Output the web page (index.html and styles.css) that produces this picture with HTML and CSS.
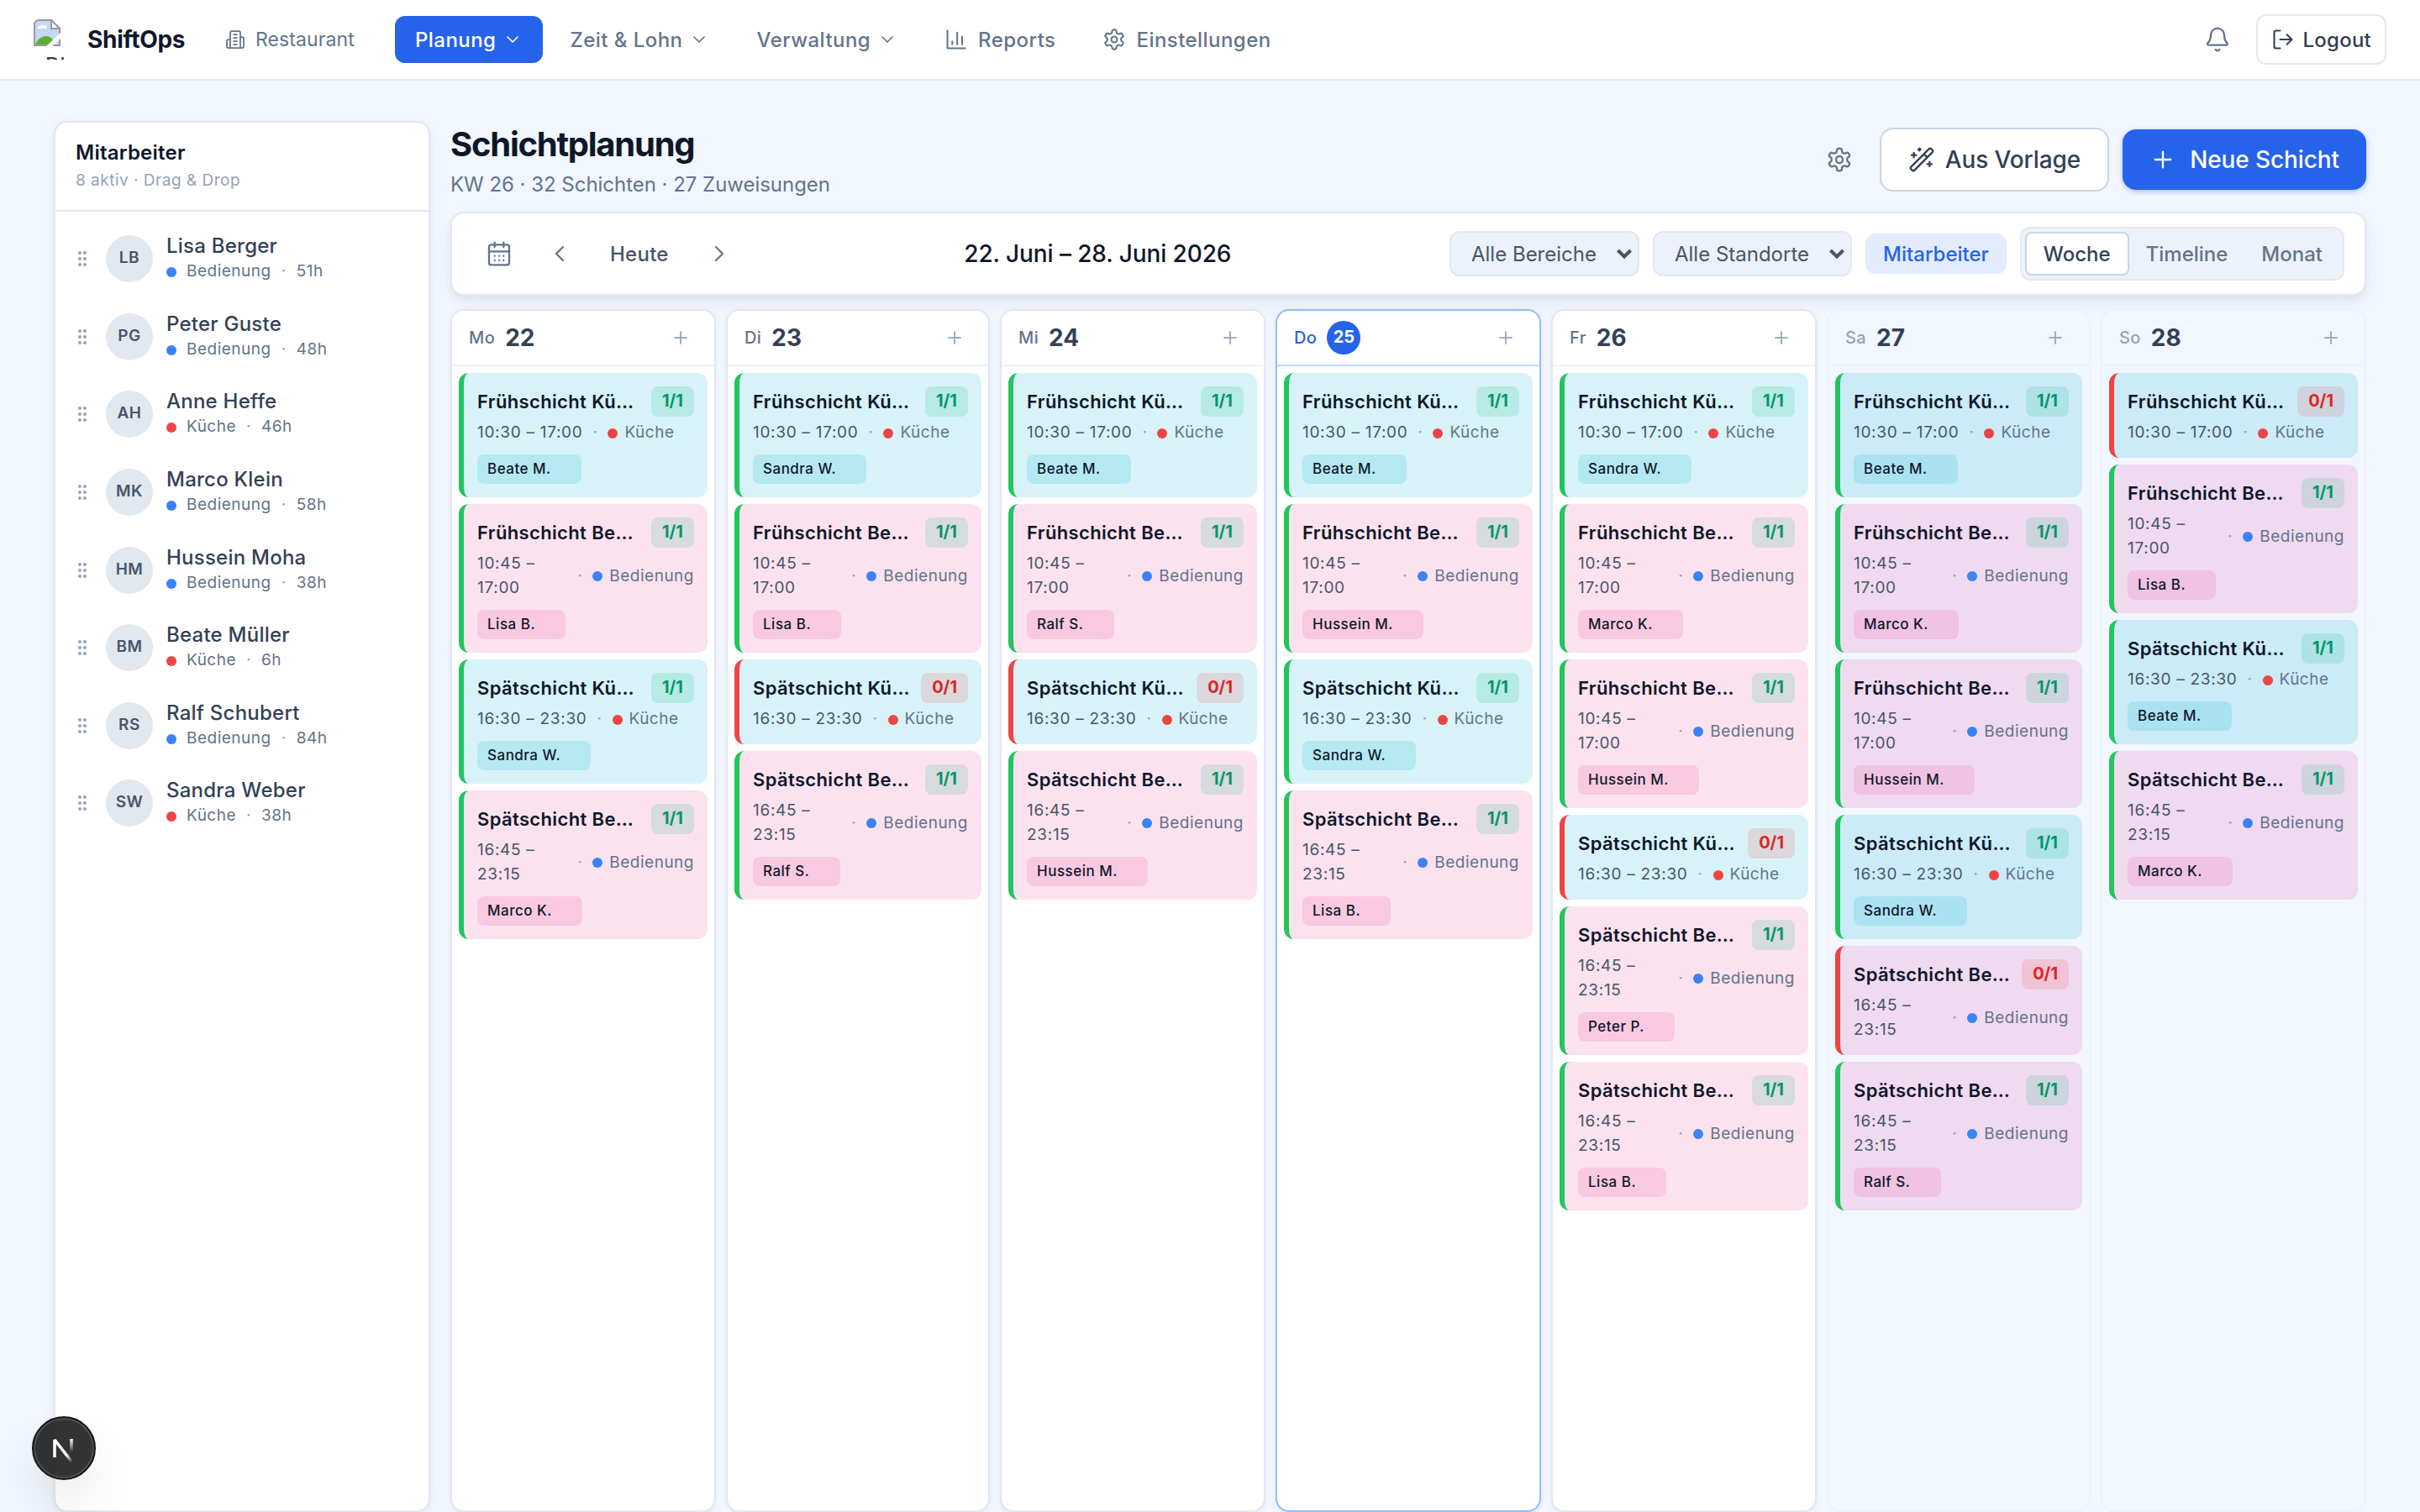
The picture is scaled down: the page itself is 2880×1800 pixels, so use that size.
FILE: index.html
```html
<!DOCTYPE html>
<html lang="de">
<head>
<meta charset="UTF-8">
<title>ShiftOps</title>
<link rel="stylesheet" href="styles.css">
</head>
<body>
<svg class="sprite">
  <symbol id="i-chevron-down" viewBox="0 0 24 24"><path d="m6 9 6 6 6-6"/></symbol>
  <symbol id="i-chevron-left" viewBox="0 0 24 24"><path d="m15 18-6-6 6-6"/></symbol>
  <symbol id="i-chevron-right" viewBox="0 0 24 24"><path d="m9 18 6-6-6-6"/></symbol>
  <symbol id="i-plus" viewBox="0 0 24 24"><path d="M5 12h14M12 5v14"/></symbol>
  <symbol id="i-building" viewBox="0 0 24 24"><path d="M6 22V4a2 2 0 0 1 2-2h8a2 2 0 0 1 2 2v18ZM6 12H4a2 2 0 0 0-2 2v6a2 2 0 0 0 2 2h2M18 9h2a2 2 0 0 1 2 2v9a2 2 0 0 1-2 2h-2M10 6h4M10 10h4M10 14h4M10 18h4"/></symbol>
  <symbol id="i-chart" viewBox="0 0 24 24"><path d="M3 3v18h18M18 17V9M13 17V5M8 17v-3"/></symbol>
  <symbol id="i-gear" viewBox="0 0 24 24"><path d="M12.22 2h-.44a2 2 0 0 0-2 2v.18a2 2 0 0 1-1 1.73l-.43.25a2 2 0 0 1-2 0l-.15-.08a2 2 0 0 0-2.73.73l-.22.38a2 2 0 0 0 .73 2.73l.15.1a2 2 0 0 1 1 1.72v.51a2 2 0 0 1-1 1.74l-.15.09a2 2 0 0 0-.73 2.73l.22.38a2 2 0 0 0 2.73.73l.15-.08a2 2 0 0 1 2 0l.43.25a2 2 0 0 1 1 1.73V20a2 2 0 0 0 2 2h.44a2 2 0 0 0 2-2v-.18a2 2 0 0 1 1-1.73l.43-.25a2 2 0 0 1 2 0l.15.08a2 2 0 0 0 2.73-.73l.22-.39a2 2 0 0 0-.73-2.73l-.15-.08a2 2 0 0 1-1-1.74v-.5a2 2 0 0 1 1-1.74l.15-.09a2 2 0 0 0 .73-2.73l-.22-.38a2 2 0 0 0-2.73-.73l-.15.08a2 2 0 0 1-2 0l-.43-.25a2 2 0 0 1-1-1.73V4a2 2 0 0 0-2-2z"/><circle cx="12" cy="12" r="3"/></symbol>
  <symbol id="i-bell" viewBox="0 0 24 24"><path d="M10.268 21a2 2 0 0 0 3.464 0M3.262 15.326A1 1 0 0 0 4 17h16a1 1 0 0 0 .74-1.673C19.41 13.956 18 12.499 18 8A6 6 0 0 0 6 8c0 4.499-1.411 5.956-2.738 7.326"/></symbol>
  <symbol id="i-logout" viewBox="0 0 24 24"><path d="M9 21H5a2 2 0 0 1-2-2V5a2 2 0 0 1 2-2h4M16 17l5-5-5-5M21 12H9"/></symbol>
  <symbol id="i-wand" viewBox="0 0 24 24"><path d="m21.64 3.64-1.28-1.28a1.21 1.21 0 0 0-1.72 0L2.36 18.64a1.21 1.21 0 0 0 0 1.72l1.28 1.28a1.2 1.2 0 0 0 1.72 0L21.64 5.36a1.2 1.2 0 0 0 0-1.72M14 7l3 3M5 6v4M19 14v4M10 2v2M7 8H3M21 16h-4M11 3H9"/></symbol>
  <symbol id="i-calendar" viewBox="0 0 24 24"><path d="M8 2v4M16 2v4M3 10h18M8 14h.01M12 14h.01M16 14h.01M8 18h.01M12 18h.01M16 18h.01"/><rect width="18" height="18" x="3" y="4" rx="2"/></symbol>
  <symbol id="i-grip" viewBox="0 0 24 24"><g fill="currentColor"><circle cx="9" cy="5" r="1"/><circle cx="9" cy="12" r="1"/><circle cx="9" cy="19" r="1"/><circle cx="15" cy="5" r="1"/><circle cx="15" cy="12" r="1"/><circle cx="15" cy="19" r="1"/></g></symbol>
</svg>

<header class="topbar">
  <div class="brand">
    <div class="logo">
      <svg viewBox="0 0 32 32">
        <path d="M1 6a5 5 0 0 1 5-5h15l10 10v20H1z" fill="#c5d8f8" stroke="#9a9a9a" stroke-width="2"/>
        <path d="M5 11a3 3 0 0 1 3-3 4 4 0 0 1 5-1 3 3 0 0 1 3 4z" fill="#fff"/>
        <path d="M2 30c2-6 8-10 13-10s9 4 10 10z" fill="#5bb030"/>
        <path d="M32 16 15 32h7l10-9z" fill="#fff"/>
        <path d="M21 1v10h10z" fill="#fff" stroke="#9a9a9a" stroke-width="2"/>
      </svg>
      <span>. Di</span>
    </div>
    <span class="brand-name">ShiftOps</span>
  </div>
  <div class="tenant"><svg class="icon"><use href="#i-building"/></svg>Restaurant</div>
  <nav class="nav">
    <a class="nav-item active">Planung<svg class="icon"><use href="#i-chevron-down"/></svg></a>
    <a class="nav-item">Zeit &amp; Lohn<svg class="icon"><use href="#i-chevron-down"/></svg></a>
    <a class="nav-item">Verwaltung<svg class="icon"><use href="#i-chevron-down"/></svg></a>
    <a class="nav-item link"><svg class="icon"><use href="#i-chart"/></svg>Reports</a>
    <a class="nav-item link"><svg class="icon"><use href="#i-gear"/></svg>Einstellungen</a>
  </nav>
  <div class="topbar-right">
    <button class="icon-btn"><svg class="icon"><use href="#i-bell"/></svg></button>
    <button class="logout"><svg class="icon"><use href="#i-logout"/></svg>Logout</button>
  </div>
</header>

<main class="page">
  <aside class="sidebar">
    <div class="sidebar-head">
      <h2>Mitarbeiter</h2>
      <p>8 aktiv · Drag &amp; Drop</p>
    </div>
    <ul class="staff" id="staff"></ul>
  </aside>

  <section class="content">
    <div class="title-row">
      <div>
        <h1>Schichtplanung</h1>
        <p class="subtitle">KW 26 · 32 Schichten · 27 Zuweisungen</p>
      </div>
      <div class="actions">
        <button class="icon-btn"><svg class="icon"><use href="#i-gear"/></svg></button>
        <button class="btn btn-outline"><svg class="icon"><use href="#i-wand"/></svg>Aus Vorlage</button>
        <button class="btn btn-primary"><svg class="icon"><use href="#i-plus"/></svg>Neue Schicht</button>
      </div>
    </div>

    <div class="toolbar">
      <div class="toolbar-nav">
        <button class="icon-btn cal"><svg class="icon"><use href="#i-calendar"/></svg></button>
        <button class="icon-btn"><svg class="icon"><use href="#i-chevron-left"/></svg></button>
        <button class="today">Heute</button>
        <button class="icon-btn"><svg class="icon"><use href="#i-chevron-right"/></svg></button>
      </div>
      <div class="range">22. Juni – 28. Juni 2026</div>
      <div class="filters">
        <div class="select">Alle Bereiche<svg viewBox="0 0 18 12"><path d="m1.500 2 7.500 7.500 7.500-7.500"/></svg></div>
        <div class="select">Alle Standorte<svg viewBox="0 0 18 12"><path d="m1.500 2 7.500 7.500 7.500-7.500"/></svg></div>
        <button class="toggle">Mitarbeiter</button>
        <div class="segment">
          <button class="on">Woche</button>
          <button>Timeline</button>
          <button>Monat</button>
        </div>
      </div>
    </div>

    <div class="week" id="week"></div>
  </section>
</main>

<div class="dev-badge">
  <svg viewBox="0 0 76 76">
    <defs>
      <linearGradient id="g1" gradientUnits="userSpaceOnUse" x1="43" y1="45" x2="49" y2="54"><stop stop-color="#fff"/><stop offset="1" stop-color="#fff" stop-opacity="0"/></linearGradient>
      <linearGradient id="g2" gradientUnits="userSpaceOnUse" x1="47" y1="27" x2="47" y2="43"><stop stop-color="#fff"/><stop offset="1" stop-color="#fff" stop-opacity="0"/></linearGradient>
    </defs>
    <path d="M27 49V28L48 55" fill="none" stroke="url(#g1)" stroke-width="3.600" stroke-linejoin="bevel"/>
    <path d="M45.200 27h3.600v16h-3.600z" fill="url(#g2)"/>
  </svg>
</div>

<script src="app.js"></script>
</body>
</html>
```
FILE: styles.css
```css
* {
  box-sizing: border-box;
  margin: 0;
  padding: 0;
}
body {
  height: 1800px;
  display: flex;
  flex-direction: column;
  background: #f1f6ff;
  color: #334155;
  font-family: Inter, "Liberation Sans", sans-serif;
  font-size: 24px;
  letter-spacing: 0.24px;
  overflow: hidden;
}
button {
  font: inherit;
  letter-spacing: inherit;
  color: inherit;
  border: 0;
  background: none;
}
ul {
  list-style: none;
}
.sprite {
  display: none;
}
.icon {
  width: 32px;
  height: 32px;
  flex-shrink: 0;
  fill: none;
  stroke: currentColor;
  stroke-width: 1.75;
  stroke-linecap: round;
  stroke-linejoin: round;
}
.icon-btn {
  width: 64px;
  height: 64px;
  display: flex;
  align-items: center;
  justify-content: center;
  color: #64748b;
}

/* top bar */
.topbar {
  height: 96px;
  flex-shrink: 0;
  display: flex;
  align-items: center;
  padding: 0 40px;
  background: #fff;
  border-bottom: 2px solid #e2e8f0;
}
.brand {
  display: flex;
  align-items: center;
  gap: 28px;
  width: 228px;
}
.logo {
  width: 36px;
  height: 48px;
  overflow: hidden;
  flex-shrink: 0;
}
.logo svg {
  display: block;
  width: 32px;
  height: 32px;
}
.logo span {
  display: block;
  margin-top: 8px;
  font-weight: 500;
  white-space: nowrap;
}
.brand-name {
  font-size: 28px;
  font-weight: 700;
  letter-spacing: -0.3px;
  color: #0f172a;
}
.tenant {
  display: flex;
  align-items: center;
  gap: 12px;
  width: 202px;
  font-size: 23px;
  letter-spacing: 0.1px;
  color: #64748b;
}
.tenant .icon {
  width: 24px;
  height: 24px;
}
.nav {
  display: flex;
  gap: 8px;
}
.nav-item {
  height: 56px;
  padding: 0 24px;
  display: flex;
  align-items: center;
  gap: 8px;
  border-radius: 12px;
  font-weight: 500;
  letter-spacing: 0.45px;
  color: #64748b;
}
.nav-item .icon {
  width: 24px;
  height: 24px;
}
.nav-item.link {
  gap: 12px;
}
.nav-item.link .icon {
  width: 28px;
  height: 28px;
}
.nav-item.active {
  background: #2563eb;
  color: #fff;
}
.topbar-right {
  margin-left: auto;
  display: flex;
  align-items: center;
  gap: 14px;
}
.logout {
  height: 60px;
  padding: 0 16px;
  display: flex;
  align-items: center;
  gap: 10px;
  border: 2px solid #e2e8f0;
  border-radius: 12px;
  font-weight: 500;
  color: #334155;
}
.logout .icon {
  width: 28px;
  height: 28px;
}

/* layout */
.page {
  flex: 1;
  min-height: 0;
  display: flex;
  gap: 24px;
  padding: 48px 64px 0;
}
.sidebar {
  width: 448px;
  flex-shrink: 0;
  background: #fff;
  border: 2px solid #e2e8f0;
  border-radius: 16px;
  box-shadow: 0 2px 6px rgba(15, 23, 42, 0.04), 0 4px 24px rgba(15, 23, 42, 0.04);
}
.sidebar-head {
  height: 106px;
  padding: 19px 24px 0;
  border-bottom: 2px solid #e2e8f0;
}
.sidebar-head h2 {
  font-size: 24px;
  line-height: 34px;
  font-weight: 600;
  color: #0f172a;
}
.sidebar-head p {
  margin-top: 1px;
  font-size: 19px;
  line-height: 30px;
  letter-spacing: 0.5px;
  color: #94a3b8;
}
.staff {
  padding-top: 10px;
}
.staff li {
  height: 92.6px;
  padding: 0 20px;
  display: flex;
  align-items: center;
  gap: 16px;
}
.staff .icon {
  width: 24px;
  height: 24px;
  stroke-width: 2;
  color: #94a3b8;
}
.avatar {
  width: 56px;
  height: 56px;
  border-radius: 50%;
  display: flex;
  align-items: center;
  justify-content: center;
  background: #e2e8f0;
  color: #475569;
  font-size: 19px;
  font-weight: 600;
  letter-spacing: 0.5px;
  padding-bottom: 3px;
}
.person-name {
  line-height: 30px;
  font-weight: 500;
}
.person-meta {
  display: flex;
  align-items: center;
  gap: 12px;
  line-height: 30px;
  font-size: 19px;
  letter-spacing: 0.5px;
  color: #64748b;
}
.dot {
  width: 12px;
  height: 12px;
  flex-shrink: 0;
  border-radius: 50%;
  background: #3b82f6;
  position: relative;
  top: 1px;
}
.dot.kueche {
  background: #ef4444;
}
.sep {
  color: #94a3b8;
}

.content {
  flex: 1;
  min-width: 0;
  display: flex;
  flex-direction: column;
}
.title-row {
  height: 108px;
  flex-shrink: 0;
  display: flex;
  justify-content: space-between;
}
h1 {
  font-size: 40px;
  line-height: 56px;
  font-weight: 700;
  letter-spacing: -1.25px;
  color: #0f172a;
}
.subtitle {
  line-height: 40px;
  letter-spacing: -0.03px;
  color: #64748b;
}
.actions {
  height: 92px;
  display: flex;
  align-items: center;
  gap: 16px;
}
.btn {
  display: flex;
  align-items: center;
  border-radius: 16px;
  padding: 0 32px;
  font-size: 28px;
  font-weight: 500;
  letter-spacing: -0.1px;
}
.btn-outline {
  height: 76px;
  gap: 12px;
  background: #fff;
  border: 2px solid #cbd5e1;
}
.btn-primary {
  height: 72px;
  gap: 16px;
  background: #2563eb;
  color: #fff;
  box-shadow: 0 2px 6px rgba(37, 99, 235, 0.35);
}

/* toolbar */
.toolbar {
  height: 100px;
  flex-shrink: 0;
  display: flex;
  align-items: center;
  justify-content: space-between;
  padding: 0 24px;
  background: #fff;
  border: 2px solid #e2e8f0;
  border-radius: 16px;
  box-shadow: 0 4px 8px rgba(15, 23, 42, 0.04), 0 8px 24px rgba(15, 23, 42, 0.06);
}
.toolbar-nav {
  display: flex;
  align-items: center;
  gap: 4px;
}
.cal {
  margin-right: 4px;
}
.today {
  padding: 0 24px;
  font-weight: 500;
  color: #475569;
}
.range {
  font-size: 28px;
  font-weight: 500;
  letter-spacing: -0.1px;
  color: #0f172a;
}
.filters {
  display: flex;
  align-items: center;
  gap: 16px;
}
.select {
  height: 54px;
  padding: 0 7px 0 24px;
  display: flex;
  align-items: center;
  gap: 24px;
  background: #edf1fb;
  border: 2px solid #e2e8f0;
  border-radius: 12px;
  letter-spacing: 0;
  color: #475569;
}
.select svg {
  width: 18px;
  height: 12px;
  fill: none;
  stroke: #475569;
  stroke-width: 4;
}
.toggle {
  height: 48px;
  padding: 0 21px;
  border-radius: 12px;
  background: #e3ebff;
  color: #2563eb;
  font-weight: 500;
  letter-spacing: 0;
}
.segment {
  height: 64px;
  padding: 4px;
  display: flex;
  background: #edf1fb;
  border: 2px solid #e2e8f0;
  border-radius: 12px;
}
.segment button {
  padding: 0 20px;
  border-radius: 8px;
  font-weight: 500;
  letter-spacing: 0;
  color: #64748b;
}
.segment .on {
  background: #fff;
  border: 2px solid #cbd5e1;
  color: #334155;
}

/* week grid */
.week {
  flex: 1;
  min-height: 0;
  margin-top: 16px;
  display: grid;
  grid-template-columns: 316px 314px 316px 316px 316px 314px 316px;
  gap: 12px;
}
.day {
  background: #fff;
  border: 2px solid #e2e8f0;
  border-radius: 16px;
  box-shadow: 0 2px 4px rgba(15, 23, 42, 0.04), 0 2px 12px rgba(15, 23, 42, 0.03);
}
.day-head {
  height: 66px;
  padding: 0 20px;
  display: flex;
  align-items: center;
  gap: 12px;
  border-bottom: 2px solid #edf1f8;
}
.day-name {
  font-size: 20px;
  font-weight: 450;
  letter-spacing: 0.4px;
  color: #64748b;
}
.day-num {
  font-size: 28px;
  font-weight: 650;
  letter-spacing: 0;
  color: #334155;
}
.day-head .icon {
  width: 24px;
  height: 24px;
  margin: 0 8px 0 auto;
  color: #94a3b8;
}
.day.today-col {
  border-color: #93bbfd;
}
.today-col .day-head {
  border-color: #bfdbfe;
}
.today-col .day-name {
  color: #2563eb;
  font-weight: 500;
}
.today-col .day-num {
  width: 40px;
  height: 40px;
  border-radius: 50%;
  background: #2563eb;
  color: #fff;
  font-size: 20px;
  line-height: 39px;
  text-align: center;
}
.day.weekend {
  background: #f1f6ff;
  border-color: #edf1f9;
  box-shadow: none;
}
.weekend .day-name {
  color: #94a3b8;
}
.shifts {
  padding: 8px;
  display: flex;
  flex-direction: column;
  gap: 8px;
}
.shift {
  --tone: 236, 72, 153;
  padding: 16px;
  border-left: 6px solid #22c55e;
  border-radius: 12px;
  background: rgba(var(--tone), 0.16);
}
.shift.kueche {
  --tone: 6, 182, 212;
}
.shift.open {
  border-left-color: #ef4444;
}
.shift-top {
  height: 36px;
  display: flex;
  justify-content: space-between;
  gap: 12px;
}
.shift-title {
  min-width: 0;
  font-size: 22px;
  line-height: 36px;
  font-weight: 600;
  letter-spacing: 0.36px;
  color: #0f172a;
  white-space: nowrap;
  overflow: hidden;
  text-overflow: ellipsis;
}
.count {
  flex-shrink: 0;
  padding: 0 13px;
  border-radius: 8px;
  font-size: 20px;
  line-height: 35px;
  font-weight: 700;
  letter-spacing: 0;
  background: rgba(16, 185, 129, 0.16);
  color: #059669;
}
.open .count {
  background: rgba(239, 68, 68, 0.15);
  color: #dc2626;
}
.shift-meta {
  margin-top: 4px;
  display: flex;
  align-items: center;
  gap: 12px;
  font-size: 19px;
  line-height: 29px;
  letter-spacing: 0.5px;
  color: #64748b;
}
.time {
  letter-spacing: 0.7px;
  color: #475569;
}
.area {
  display: flex;
  align-items: center;
  gap: 8px;
}
.chip {
  width: fit-content;
  height: 35px;
  margin-top: 12px;
  padding: 0 36px 0 12px;
  border-radius: 8px;
  background: rgba(var(--tone), 0.16);
  color: #0f172a;
  font-size: 17px;
  line-height: 35px;
  font-weight: 450;
  letter-spacing: 0.5px;
}

.dev-badge {
  position: fixed;
  left: 38px;
  bottom: 38px;
  width: 76px;
  height: 76px;
  border-radius: 50%;
  background: rgba(0, 0, 0, 0.8);
  border: 2px solid #171717;
  box-shadow: inset 0 0 0 2px rgba(255, 255, 255, 0.14), 0 32px 64px -16px rgba(0, 0, 0, 0.24);
}
.dev-badge svg {
  display: block;
  width: 76px;
  height: 76px;
  margin: -2px;
}
```
FILE: app.js
```javascript
const staff = [
  ["Lisa Berger", "LB", "B", "51h"],
  ["Peter Guste", "PG", "B", "48h"],
  ["Anne Heffe", "AH", "K", "46h"],
  ["Marco Klein", "MK", "B", "58h"],
  ["Hussein Moha", "HM", "B", "38h"],
  ["Beate Müller", "BM", "K", "6h"],
  ["Ralf Schubert", "RS", "B", "84h"],
  ["Sandra Weber", "SW", "K", "38h"],
];

// F = Frühschicht, S = Spätschicht; K = Küche, B = Bedienung
const times = {
  FK: "10:30 – 17:00",
  FB: "10:45 – 17:00",
  SK: "16:30 – 23:30",
  SB: "16:45 – 23:15",
};

const days = [
  { name: "Mo", num: 22, shifts: [["FK", "Beate M."], ["FB", "Lisa B."], ["SK", "Sandra W."], ["SB", "Marco K."]] },
  { name: "Di", num: 23, shifts: [["FK", "Sandra W."], ["FB", "Lisa B."], ["SK"], ["SB", "Ralf S."]] },
  { name: "Mi", num: 24, shifts: [["FK", "Beate M."], ["FB", "Ralf S."], ["SK"], ["SB", "Hussein M."]] },
  { name: "Do", num: 25, cls: "today-col", shifts: [["FK", "Beate M."], ["FB", "Hussein M."], ["SK", "Sandra W."], ["SB", "Lisa B."]] },
  { name: "Fr", num: 26, shifts: [["FK", "Sandra W."], ["FB", "Marco K."], ["FB", "Hussein M."], ["SK"], ["SB", "Peter P."], ["SB", "Lisa B."]] },
  { name: "Sa", num: 27, cls: "weekend", shifts: [["FK", "Beate M."], ["FB", "Marco K."], ["FB", "Hussein M."], ["SK", "Sandra W."], ["SB"], ["SB", "Ralf S."]] },
  { name: "So", num: 28, cls: "weekend", shifts: [["FK"], ["FB", "Lisa B."], ["SK", "Beate M."], ["SB", "Marco K."]] },
];

const areaName = (a) => (a === "K" ? "Küche" : "Bedienung");
const dot = (a) => `<span class="dot ${a === "K" ? "kueche" : ""}"></span>`;

document.getElementById("staff").innerHTML = staff
  .map(([name, initials, area, hours]) => `
    <li>
      <svg class="icon"><use href="#i-grip"/></svg>
      <span class="avatar">${initials}</span>
      <div>
        <div class="person-name">${name}</div>
        <div class="person-meta">${dot(area)}<span>${areaName(area)}</span><span class="sep">·</span><span>${hours}</span></div>
      </div>
    </li>`)
  .join("");

function shiftCard([type, person]) {
  const area = type[1];
  const title = (type[0] === "F" ? "Frühschicht " : "Spätschicht ") + areaName(area);
  return `
    <div class="shift ${area === "K" ? "kueche" : ""} ${person ? "" : "open"}">
      <div class="shift-top">
        <span class="shift-title">${title}</span>
        <span class="count">${person ? 1 : 0}/1</span>
      </div>
      <div class="shift-meta">
        <span class="time">${times[type]}</span><span class="sep">·</span>
        <span class="area">${dot(area)}${areaName(area)}</span>
      </div>
      ${person ? `<div class="chip">${person}</div>` : ""}
    </div>`;
}

document.getElementById("week").innerHTML = days
  .map((d) => `
    <div class="day ${d.cls || ""}">
      <div class="day-head">
        <span class="day-name">${d.name}</span>
        <span class="day-num">${d.num}</span>
        <svg class="icon"><use href="#i-plus"/></svg>
      </div>
      <div class="shifts">${d.shifts.map(shiftCard).join("")}</div>
    </div>`)
  .join("");
```
